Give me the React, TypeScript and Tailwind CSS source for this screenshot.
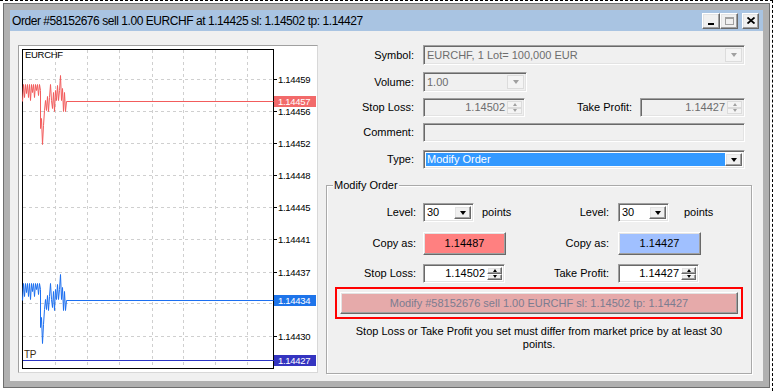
import React from 'react';

const sunken =
  'border border-t-[#a0a0a0] border-l-[#a0a0a0] border-r-white border-b-white shadow-[inset_1px_1px_0_#696969,inset_-1px_-1px_0_#e3e3e3]';
const raised =
  'border border-t-white border-l-white border-r-[#696969] border-b-[#696969] shadow-[inset_-1px_-1px_0_#a0a0a0,inset_1px_1px_0_#e3e3e3]';

const Arrow = ({ disabled }: { disabled?: boolean }) => (
  <div
    className={`w-0 h-0 border-x-[3.5px] border-x-transparent border-t-[4px] ${
      disabled ? 'border-t-[#a0a0a0]' : 'border-t-black'
    }`}
  />
);

const SpinTri = ({ up, disabled }: { up?: boolean; disabled?: boolean }) => (
  <div
    className={`w-0 h-0 border-x-[2.5px] border-x-transparent ${
      up
        ? disabled
          ? 'border-b-[3px] border-b-[#a0a0a0]'
          : 'border-b-[3px] border-b-black'
        : disabled
        ? 'border-t-[3px] border-t-[#a0a0a0]'
        : 'border-t-[3px] border-t-black'
    }`}
  />
);

const Select = ({
  value,
  width,
  disabled,
  highlight,
}: {
  value: string;
  width: string;
  disabled?: boolean;
  highlight?: boolean;
}) => (
  <div
    className={`h-full ${width} ${sunken} flex items-stretch p-[2px] ${
      disabled ? 'bg-[#f0f0f0] text-[#6d6d6d]' : 'bg-white text-black'
    }`}
  >
    <div className={`flex-1 flex items-center pl-[1px] ${highlight ? 'bg-[#3399ff] text-white' : ''}`}>{value}</div>
    <div
      className={`w-[17px] flex items-center justify-center ${
        disabled ? 'bg-[#f4f4f4] border border-[#dcdcdc]' : 'bg-[#f0f0f0] ' + raised
      }`}
    >
      <Arrow disabled={disabled} />
    </div>
  </div>
);

const Spin = ({ value, width, disabled }: { value: string; width: string; disabled?: boolean }) => (
  <div
    className={`h-full ${width} ${sunken} flex items-stretch p-[2px] ${
      disabled ? 'bg-[#f0f0f0] text-[#6d6d6d]' : 'bg-white text-black'
    }`}
  >
    <div className="flex-1 flex items-center justify-end pr-[2px]">{value}</div>
    <div className="w-[15px] flex flex-col">
      <div
        className={`flex-1 flex items-center justify-center ${
          disabled ? 'bg-[#f4f4f4] border border-[#dcdcdc]' : 'bg-[#f0f0f0] ' + raised
        }`}
      >
        <SpinTri up disabled={disabled} />
      </div>
      <div
        className={`flex-1 flex items-center justify-center ${
          disabled ? 'bg-[#f4f4f4] border border-[#dcdcdc]' : 'bg-[#f0f0f0] ' + raised
        }`}
      >
        <SpinTri disabled={disabled} />
      </div>
    </div>
  </div>
);

const redPts: [number, number][] = [
  [22, 101], [23, 84], [24, 97], [25, 84], [26, 93], [27, 84], [28, 97], [29, 84], [30, 100], [31, 84],
  [32, 92], [33, 84], [34, 97], [35, 84], [36, 90], [37, 84], [38, 95], [39, 84], [40, 90], [40, 128],
  [41, 118], [42, 144], [43, 125], [44, 110], [45, 100], [46, 110], [47, 96], [48, 111], [49, 97], [50, 84],
  [51, 100], [52, 108], [53, 92], [54, 111], [55, 90], [56, 100], [57, 85], [58, 100], [59, 90], [60, 75],
  [61, 100], [62, 88], [63, 111], [64, 92], [65, 111], [66, 101], [273, 101],
];

const gridY = [79, 111, 143, 175, 207, 239, 272, 303, 336];
const gridX = [55, 87, 119, 152, 183, 215, 247];
const labels: [number, string][] = [
  [79, '1.14459'],
  [111, '1.14456'],
  [143, '1.14452'],
  [175, '1.14448'],
  [207, '1.14445'],
  [239, '1.14441'],
  [272, '1.14437'],
  [336, '1.14430'],
];

const Chart = () => (
  <svg
    width={298}
    height={326}
    viewBox="19 46 298 326"
    fontFamily="'Liberation Sans', Arial, sans-serif"
    fontSize={9.5}
    letterSpacing={-0.3}
  >
    <rect x={19} y={46} width={298} height={326} fill="#fff" />
    {gridY.map((y) => (
      <line key={'h' + y} x1={23} x2={273} y1={y + 0.5} y2={y + 0.5} stroke="#cfcfcf" strokeDasharray="3 3" />
    ))}
    {gridX.map((x) => (
      <line key={'v' + x} x1={x + 0.5} x2={x + 0.5} y1={50} y2={368} stroke="#cfcfcf" strokeDasharray="3 3" />
    ))}
    <rect x={22.5} y={49.5} width={251} height={319} fill="none" stroke="#000" />
    {gridY.map((y) => (
      <line key={'t' + y} x1={274} x2={277} y1={y + 0.5} y2={y + 0.5} stroke="#000" />
    ))}
    {labels.map(([y, t]) => (
      <text key={t} x={278} y={y + 4} fill="#000">
        {t}
      </text>
    ))}
    <text x={25} y={58} fill="#000">
      EURCHF
    </text>
    <polyline points={redPts.map(([x, y]) => `${x + 0.5},${y + 0.5}`).join(' ')} fill="none" stroke="#f25c5c" />
    <polyline points={redPts.map(([x, y]) => `${x + 0.5},${y + 199.5}`).join(' ')} fill="none" stroke="#1c6ff0" />
    <line x1={23} x2={274} y1={360.5} y2={360.5} stroke="#2b35c4" />
    <text x={24} y={358} fontSize={10} fill="#3a2a10">
      TP
    </text>
    <rect x={274} y={96} width={42} height={11} fill="#f26a6a" />
    <text x={278} y={105} fill="#fff">
      1.14457
    </text>
    <rect x={274} y={295} width={42} height={11} fill="#1e74ea" />
    <text x={278} y={304} fill="#fff">
      1.14434
    </text>
    <rect x={274} y={355} width={42} height={11} fill="#3434c0" />
    <text x={278} y={364} fill="#fff">
      1.14427
    </text>
  </svg>
);

const Label = ({ children, width }: { children: React.ReactNode; width: string }) => (
  <div className={`${width} text-right whitespace-nowrap`}>{children}</div>
);

export default function App() {
  return (
    <div className="w-[773px] h-[391px] overflow-hidden bg-white border-t border-r border-dashed border-black pt-[2px] pl-[3px] font-['Liberation_Sans',Arial,sans-serif] text-[11px] text-black">
      <div className="w-[767px] h-[385px] border border-[#6e6e6e] bg-[#b0b0b0] p-[6px] flex flex-col">
        {/* title bar */}
        <div className="h-[21px] bg-[#a9c4e2] flex items-center pl-[2px] pr-[4px]">
          <div className="flex-1 text-[12px] tracking-[-0.45px] whitespace-nowrap">
            Order #58152676 sell 1.00 EURCHF at 1.14425 sl: 1.14502 tp: 1.14427
          </div>
          <div className={`w-[18px] h-[16px] bg-[#f0f0f0] ${raised} flex items-end justify-center pb-[3px]`}>
            <div className="w-[6px] h-[2px] bg-black" />
          </div>
          <div className={`w-[18px] h-[16px] bg-[#f0f0f0] ${raised} flex items-center justify-center`}>
            <div className="w-[9px] h-[8px] border border-t-2 border-[#a0a0a0]" />
          </div>
          <div className={`ml-[4px] w-[17px] h-[16px] bg-[#f0f0f0] ${raised} flex items-center justify-center`}>
            <svg width="8" height="7" viewBox="0 0 8 7">
              <path d="M0.5 0.5 L7.5 6.5 M7.5 0.5 L0.5 6.5" stroke="#000" strokeWidth="1.8" />
            </svg>
          </div>
        </div>

        {/* content */}
        <div className="flex-1 bg-[#f0f0f0] flex pl-[8px] pt-[14px]">
          <div className="w-[300px] h-[328px] border border-t-[#a0a0a0] border-l-[#a0a0a0] border-r-[#d8d8d8] border-b-[#d8d8d8]">
            <Chart />
          </div>

          <div className="ml-[7px] w-[427px] flex flex-col">
            <div className="h-[20px] flex items-center">
              <Label width="w-[89px]">Symbol:</Label>
              <div className="ml-[9px] h-full">
                <Select value="EURCHF, 1 Lot= 100,000 EUR" width="w-[322px]" disabled />
              </div>
            </div>
            <div className="mt-[7px] h-[20px] flex items-center">
              <Label width="w-[89px]">Volume:</Label>
              <div className="ml-[9px] h-full">
                <Select value="1.00" width="w-[104px]" disabled />
              </div>
            </div>
            <div className="mt-[6px] h-[19px] flex items-center">
              <Label width="w-[89px]">Stop Loss:</Label>
              <div className="ml-[9px] h-full">
                <Spin value="1.14502" width="w-[102px]" disabled />
              </div>
              <Label width="w-[107px]">Take Profit:</Label>
              <div className="ml-[8px] h-full">
                <Spin value="1.14427" width="w-[105px]" disabled />
              </div>
            </div>
            <div className="mt-[6px] h-[19px] flex items-center">
              <Label width="w-[89px]">Comment:</Label>
              <div className={`ml-[9px] h-full w-[322px] bg-[#f0f0f0] ${sunken}`} />
            </div>
            <div className="mt-[8px] h-[19px] flex items-center">
              <Label width="w-[89px]">Type:</Label>
              <div className="ml-[9px] h-full">
                <Select value="Modify Order" width="w-[322px]" highlight />
              </div>
            </div>

            {/* Modify Order group */}
            <div className="mt-[16px] ml-[1px] w-[426px] h-[189px] relative border border-[#a9a9a9] shadow-[inset_1px_1px_0_#fff,1px_1px_0_#fff] flex flex-col">
              <div className="absolute left-[6px] top-[-7px] px-[1px] bg-[#f0f0f0] leading-[13px]">Modify Order</div>

              <div className="mt-[17px] h-[19px] flex items-center">
                <div className="w-[193px] h-full flex items-center">
                  <Label width="w-[89px]">Level:</Label>
                  <div className="ml-[7px] h-full">
                    <Select value="30" width="w-[51px]" />
                  </div>
                  <div className="ml-[8px]">points</div>
                </div>
                <div className="h-full flex items-center">
                  <Label width="w-[89px]">Level:</Label>
                  <div className="ml-[9px] h-full">
                    <Select value="30" width="w-[51px]" />
                  </div>
                  <div className="ml-[15px]">points</div>
                </div>
              </div>

              <div className="mt-[10px] h-[23px] flex items-center">
                <div className="w-[193px] h-full flex items-center">
                  <Label width="w-[89px]">Copy as:</Label>
                  <div className={`ml-[7px] h-full w-[83px] bg-[#ff8080] ${raised} flex items-center justify-center`}>
                    1.14487
                  </div>
                </div>
                <div className="h-full flex items-center">
                  <Label width="w-[89px]">Copy as:</Label>
                  <div className={`ml-[9px] h-full w-[83px] bg-[#a0c0ff] ${raised} flex items-center justify-center`}>
                    1.14427
                  </div>
                </div>
              </div>

              <div className="mt-[9px] h-[19px] flex items-center">
                <div className="w-[193px] h-full flex items-center">
                  <Label width="w-[89px]">Stop Loss:</Label>
                  <div className="ml-[7px] h-full">
                    <Spin value="1.14502" width="w-[82px]" />
                  </div>
                </div>
                <div className="h-full flex items-center">
                  <Label width="w-[89px]">Take Profit:</Label>
                  <div className="ml-[9px] h-full">
                    <Spin value="1.14427" width="w-[81px]" />
                  </div>
                </div>
              </div>

              <div className="mt-[4px] ml-[8px] w-[408px] h-[32px] border-2 border-[#ff0000] p-[3px]">
                <div
                  className={`h-full ${raised} bg-[#e6aaaa] flex items-center justify-center text-[#7c7c90] whitespace-nowrap`}
                >
                  Modify #58152676 sell 1.00 EURCHF sl: 1.14502 tp: 1.14427
                </div>
              </div>

              <div className="mt-[6px] w-[378px] mx-auto text-center leading-[13px]">
                Stop Loss or Take Profit you set must differ from market price by at least 30 points.
              </div>
            </div>
          </div>
        </div>
      </div>
    </div>
  );
}
